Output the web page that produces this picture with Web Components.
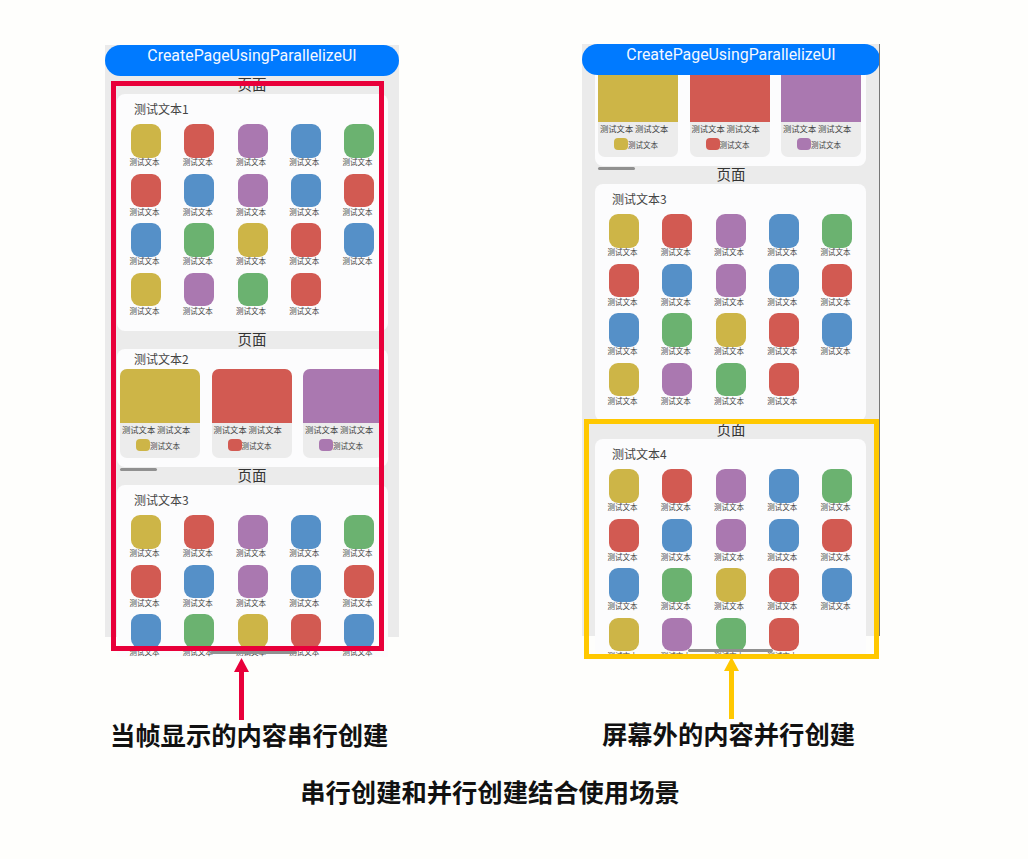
<!DOCTYPE html>
<html lang="zh">
<head>
<meta charset="utf-8">
<title>串行创建和并行创建结合使用场景</title>
<style>
	html, body { margin: 0; padding: 0; background: #fefefc; }
	body { font-family: Roboto, "Noto Sans CJK SC", sans-serif; width: 1028px; height: 859px; overflow: hidden; }
</style>
</head>
<body>

<scene-page>
	<demo-column style="--col-w: 294px; --col-top: 45px; --arrow-left: 129px; --cap-left: 5px" caption="当帧显示的内容串行创建" color="#e8003a">
		<demo-phone shift="31" inset="12" bar-left="105" bar-width="87" bar-top="606">
			<page-section><grid-card heading="测试文本1"></grid-card></page-section>
			<page-section><row-card heading="测试文本2"></row-card></page-section>
			<page-section><grid-card heading="测试文本3"></grid-card></page-section>
		</demo-phone>
		<focus-frame slot="frame" style="left: 6px; top: 36px; width: 273px; height: 570px; --frame: #e8003a"></focus-frame>
	</demo-column>
	<demo-column style="--col-w: 298px; --col-top: 44px; --arrow-left: 142px; --cap-left: 20px" caption="屏幕外的内容并行创建" color="#ffc800">
		<!-- scrolled state: the top of this page is already behind the title bar -->
		<demo-phone shift="4" inset="13" bar-left="106" bar-width="85" bar-top="605" edge>
			<page-section untitled><row-card></row-card></page-section>
			<page-section><grid-card heading="测试文本3"></grid-card></page-section>
			<page-section><grid-card heading="测试文本4"></grid-card></page-section>
		</demo-phone>
		<focus-frame slot="frame" style="left: 2px; top: 375px; width: 295px; height: 240px; --frame: #ffc800"></focus-frame>
	</demo-column>
	<span slot="footer">串行创建和并行创建结合使用场景</span>
</scene-page>

<script>
	(function() {
		const COLORS = {y: '#cdb547', r: '#d25a52', p: '#aa78b0', b: '#5590c8', g: '#6bb270'};
		const GRID = ['y','r','p','b','g', 'r','b','p','b','r', 'b','g','y','r','b', 'y','p','g','r'];
		const LABEL = '测试文本';

		class ScenePage extends HTMLElement {
			constructor() {
				super();
				this.attachShadow({mode: 'open'}).innerHTML = `
					<style>
						:host { display: block; width: 1028px; height: 859px; font-family: "Noto Sans CJK SC", sans-serif; }
						.cols { display: flex; align-items: flex-start; gap: 183px; padding-left: 105px; }
						.foot { margin-top: 27px; text-align: center; width: 980px; color: #111;
							font-size: 25.3px; font-weight: 700; line-height: 30px; }
					</style>
					<div class="cols"><slot></slot></div>
					<div class="foot"><slot name="footer"></slot></div>`;
			}
		}

		class DemoColumn extends HTMLElement {
			constructor() {
				super();
				this.attachShadow({mode: 'open'}).innerHTML = `
					<style>
						:host { display: block; position: relative; width: var(--col-w); padding-top: var(--col-top); }
						.wrap { position: relative; }
						svg { display: block; margin: 1px 0 0 var(--arrow-left); }
						.cap { margin-left: var(--cap-left); margin-top: -1px; color: #111; font-size: 25.3px; font-weight: 700; line-height: 30px; white-space: nowrap; }
					</style>
					<div class="wrap"><slot></slot><slot name="frame"></slot></div>
					<svg width="15" height="62" viewBox="0 0 15 62"><path id="arrow" d="M7.5 0 15 14H10V62H5V14H0Z"/></svg>
					<div class="cap"></div>`;
				this.shadowRoot.querySelector('.cap').textContent = this.getAttribute('caption');
				this.shadowRoot.querySelector('#arrow').setAttribute('fill', this.getAttribute('color'));
			}
		}

		class FocusFrame extends HTMLElement {
			constructor() {
				super();
				this.attachShadow({mode: 'open'}).innerHTML = `
					<style>
						:host { display: block; position: absolute; box-sizing: border-box; border: 5px solid var(--frame); pointer-events: none; }
					</style>`;
			}
		}

		class DemoPhone extends HTMLElement {
			constructor() {
				super();
				this.attachShadow({mode: 'open'}).innerHTML = `
					<style>
						:host { display: block; position: relative; height: 612px; overflow: hidden;
							background: linear-gradient(#ebebeb 592px, transparent 592px); }
						.scroll { display: flex; flex-direction: column; }
						.bar { position: absolute; top: 0; left: 0; right: 0; height: 31px; box-sizing: border-box; padding-top: 0.5px;
							background: #007aff; border-radius: 15.5px; color: #f4f8ff; text-align: center;
							font: 400 15.9px/19px Roboto, sans-serif; }
						.thumb { position: absolute; height: 3px; background: #909090; border-radius: 1.5px; }
						.edge { position: absolute; top: 0; right: 0; bottom: 20px; width: 1px; background: #777; }
					</style>
					<div class="scroll"><slot></slot></div>
					<div class="thumb"></div>
					<div class="bar">CreatePageUsingParallelizeUI</div>`;
				const scroll = this.shadowRoot.querySelector('.scroll');
				scroll.style.marginTop = this.getAttribute('shift') + 'px';
				this.style.setProperty('--inset', this.getAttribute('inset') + 'px');
				const thumb = this.shadowRoot.querySelector('.thumb');
				thumb.style.left = this.getAttribute('bar-left') + 'px';
				thumb.style.width = this.getAttribute('bar-width') + 'px';
				thumb.style.top = this.getAttribute('bar-top') + 'px';
				if(this.hasAttribute('edge')) {
					const edge = document.createElement('div');
					edge.className = 'edge';
					this.shadowRoot.appendChild(edge);
				}
			}
		}

		class PageSection extends HTMLElement {
			constructor() {
				super();
				this.attachShadow({mode: 'open'}).innerHTML = `
					<style>
						:host { display: block; }
						.title { height: 18px; line-height: 15px; text-align: center; color: #333; font-size: 14.5px; }
					</style>
					<div class="title">页面</div>
					<slot></slot>`;
				if(this.hasAttribute('untitled'))
					this.shadowRoot.querySelector('.title').remove();
			}
		}

		class IconTile extends HTMLElement {
			constructor() {
				super();
				this.attachShadow({mode: 'open'}).innerHTML = `
					<style>
						:host { display: block; width: 30px; }
						.icon { height: 33.5px; border-radius: 9px; }
						.label { margin: -0.5px 0 0 -1.5px; width: 34px; height: 10px; line-height: 10px; font-size: 7.5px; color: #444; white-space: nowrap; }
					</style>
					<div class="icon"></div>
					<div class="label"></div>`;
				this.shadowRoot.querySelector('.label').textContent = LABEL;
			}

			// attributes are only there once the element is attached
			connectedCallback() {
				this.shadowRoot.querySelector('.icon').style.background = COLORS[this.getAttribute('tone')];
			}
		}

		class GridCard extends HTMLElement {
			constructor() {
				super();
				this.attachShadow({mode: 'open'}).innerHTML = `
					<style>
						:host { display: block; box-sizing: border-box; width: 271px; height: 237px; margin-left: var(--inset);
							background: #fcfcfd; border-radius: 8px; }
						h3 { margin: 0; padding-left: 17px; height: 30px; font-size: 12px; line-height: 30px; font-weight: 400; color: #444; }
						.grid { display: grid; grid-template-columns: repeat(5, 30px); justify-content: space-between;
							grid-auto-rows: 49.67px; padding: 0 14px; }
					</style>
					<h3></h3>
					<div class="grid"></div>`;
				this.shadowRoot.querySelector('h3').textContent = this.getAttribute('heading');
				const grid = this.shadowRoot.querySelector('.grid');
				GRID.forEach(function(tone) {
					const tile = document.createElement('icon-tile');
					tile.setAttribute('tone', tone);
					grid.appendChild(tile);
				});
			}
		}

		class PromoTile extends HTMLElement {
			constructor() {
				super();
				this.attachShadow({mode: 'open'}).innerHTML = `
					<style>
						:host { display: block; flex: none; width: 80px; height: 88.5px; background: #ececec; border-radius: 7px; overflow: hidden; }
						.pic { height: 54px; }
						.line { height: 13px; padding-left: 2px; line-height: 13px; font-size: 8.3px; color: #444; white-space: nowrap; }
						.sub { display: flex; justify-content: center; align-items: center; margin-top: 2px; padding-right: 4px; height: 14px; font-size: 7.5px; color: #444; white-space: nowrap; }
						.dot { width: 14px; height: 12px; border-radius: 4px; }
					</style>
					<div class="pic"></div>
					<div class="line">${LABEL} ${LABEL}</div>
					<div class="sub"><span class="dot"></span><span>${LABEL}</span></div>`;
			}

			connectedCallback() {
				const tone = COLORS[this.getAttribute('tone')];
				this.shadowRoot.querySelector('.pic').style.background = tone;
				this.shadowRoot.querySelector('.dot').style.background = tone;
			}
		}

		class RowCard extends HTMLElement {
			constructor() {
				super();
				this.attachShadow({mode: 'open'}).innerHTML = `
					<style>
						:host { display: block; position: relative; box-sizing: border-box; width: 271px; height: 118px; margin-left: var(--inset);
							background: #fcfcfd; border-radius: 8px; }
						h3 { margin: 0; padding-left: 17px; height: 20px; font-size: 12px; line-height: 20px; font-weight: 400; color: #444; }
						.row { display: flex; gap: 11.5px; padding-left: 3px; }
						.thumb { position: absolute; left: 3px; bottom: -4px; width: 37px; height: 3px; border-radius: 1.5px; background: #909090; }
					</style>
					<h3></h3>
					<div class="row"></div>
					<div class="thumb"></div>`;
				this.shadowRoot.querySelector('h3').textContent = this.getAttribute('heading');
				const row = this.shadowRoot.querySelector('.row');
				['y', 'r', 'p'].forEach(function(tone) {
					const tile = document.createElement('promo-tile');
					tile.setAttribute('tone', tone);
					row.appendChild(tile);
				});
			}
		}

		customElements.define('icon-tile', IconTile);
		customElements.define('promo-tile', PromoTile);
		customElements.define('grid-card', GridCard);
		customElements.define('row-card', RowCard);
		customElements.define('page-section', PageSection);
		customElements.define('demo-phone', DemoPhone);
		customElements.define('focus-frame', FocusFrame);
		customElements.define('demo-column', DemoColumn);
		customElements.define('scene-page', ScenePage);
	})();
</script>
</body>
</html>
